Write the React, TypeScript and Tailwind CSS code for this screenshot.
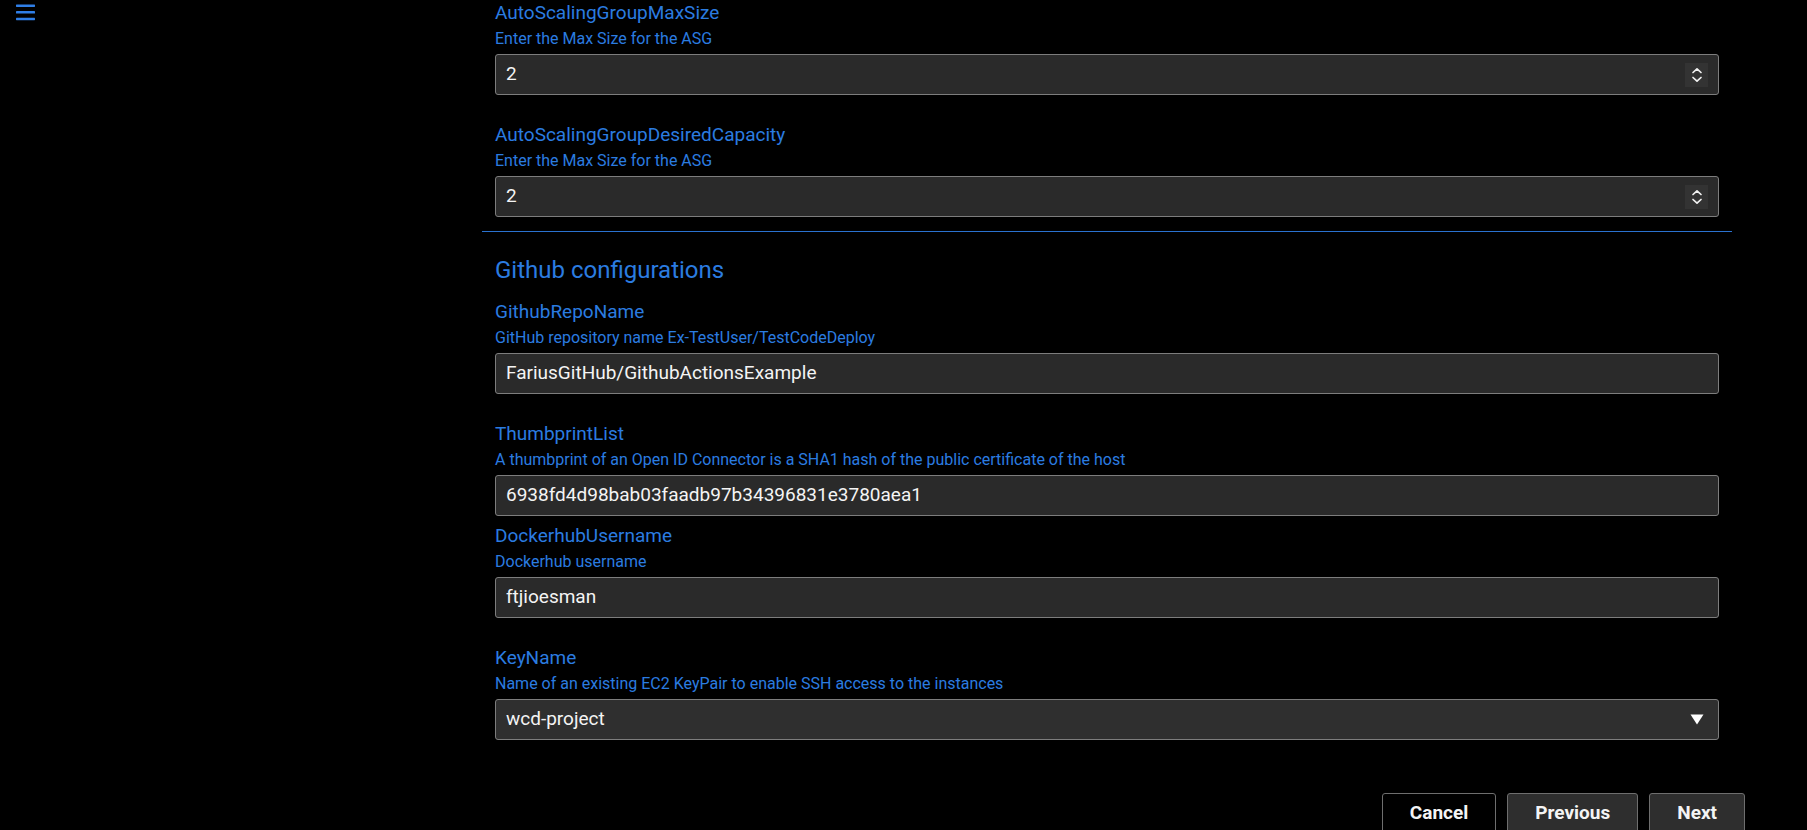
import React from "react";

type FieldKind = "number" | "text" | "select";

interface FieldProps {
	label: string;
	desc: string;
	value: string;
	kind: FieldKind;
	className?: string;
}

const Spinner = () => (
	<div className="flex items-center justify-center w-[23px] h-[24px] bg-[#333333] mr-[10px]">
		<svg width="12" height="18" viewBox="0 0 12 18" fill="none">
			<path d="M2 6.5 L6 2.8 L10 6.5" stroke="#f2f2f2" strokeWidth="1.7" strokeLinecap="round" strokeLinejoin="round" />
			<path d="M2 11.5 L6 15.2 L10 11.5" stroke="#f2f2f2" strokeWidth="1.7" strokeLinecap="round" strokeLinejoin="round" />
		</svg>
	</div>
);

const Caret = () => (
	<svg width="14" height="11" viewBox="0 0 14 11" className="mr-[14px]">
		<path d="M0.5 0.5 H13.5 L7 10.5 Z" fill="#ffffff" />
	</svg>
);

const Field = ({ label, desc, value, kind, className }: FieldProps) => {
	return (
		<div className={className}>
			<div className="text-[19px] leading-[26px] text-[#2b7ce0]">{label}</div>
			<div className="mt-[2px] text-[16px] leading-[22px] text-[#2b7ce0]">{desc}</div>
			<div
				className={`mt-[4px] h-[41px] flex items-center border border-[#7d7d7d] rounded-[3px] ${
					kind === "select" ? "bg-[#2f2f2f]" : "bg-[#2a2a2a]"
				}`}
			>
				{kind === "select" ? (
					<>
						<span className="flex-1 pl-[10px] text-[19px] text-[#f4f4f4]">{value}</span>
						<Caret />
					</>
				) : (
					<>
						<input
							readOnly
							defaultValue={value}
							className="flex-1 min-w-0 bg-transparent outline-none pl-[10px] text-[19px] text-[#f4f4f4]"
						/>
						{kind === "number" && <Spinner />}
					</>
				)}
			</div>
		</div>
	);
};

const App = () => {
	return (
		<div className="h-[830px] overflow-hidden bg-black font-['Roboto',sans-serif]">
			<div className="flex">
				<div className="w-[482px] shrink-0 pl-[16px] pt-[4px]">
					<button className="block cursor-pointer">
						<svg width="19" height="17" viewBox="0 0 19 17">
							<rect x="0" y="0.5" width="19" height="2.4" rx="0.6" fill="#2f7ee6" />
							<rect x="0" y="7.1" width="19" height="2.4" rx="0.6" fill="#2f7ee6" />
							<rect x="0" y="13.8" width="19" height="2.4" rx="0.6" fill="#2f7ee6" />
						</svg>
					</button>
				</div>
				<main className="w-[1250px] shrink-0">
					<div className="px-[13px]">
						<Field
							label="AutoScalingGroupMaxSize"
							desc="Enter the Max Size for the ASG"
							value="2"
							kind="number"
							className="mb-[27px]"
						/>
						<Field
							label="AutoScalingGroupDesiredCapacity"
							desc="Enter the Max Size for the ASG"
							value="2"
							kind="number"
						/>
					</div>
					<div className="mt-[14px] h-px bg-[#2a72d0]" />
					<div className="px-[13px]">
						<h2 className="mt-[22px] mb-[13px] text-[24px] leading-[32px] text-[#2b7ce0]">
							Github configurations
						</h2>
						<Field
							label="GithubRepoName"
							desc="GitHub repository name Ex-TestUser/TestCodeDeploy"
							value="FariusGitHub/GithubActionsExample"
							kind="text"
							className="mb-[27px]"
						/>
						<Field
							label="ThumbprintList"
							desc="A thumbprint of an Open ID Connector is a SHA1 hash of the public certificate of the host"
							value="6938fd4d98bab03faadb97b34396831e3780aea1"
							kind="text"
							className="mb-[7px]"
						/>
						<Field
							label="DockerhubUsername"
							desc="Dockerhub username"
							value="ftjioesman"
							kind="text"
							className="mb-[27px]"
						/>
						<Field
							label="KeyName"
							desc="Name of an existing EC2 KeyPair to enable SSH access to the instances"
							value="wcd-project"
							kind="select"
						/>
						<div className="mt-[53px] -mr-[26px] flex justify-end gap-[11px]">
							<button className="h-[40px] px-[27px] border border-[#6e6e6e] rounded-[3px] bg-black text-[19px] font-bold text-[#f4f4f4]">
								Cancel
							</button>
							<button className="h-[40px] px-[27px] border border-[#6e6e6e] rounded-[3px] bg-[#2e2e2e] text-[19px] font-bold text-[#f4f4f4]">
								Previous
							</button>
							<button className="h-[40px] px-[27px] border border-[#6e6e6e] rounded-[3px] bg-[#2e2e2e] text-[19px] font-bold text-[#f4f4f4]">
								Next
							</button>
						</div>
					</div>
				</main>
			</div>
		</div>
	);
};

export default App;
